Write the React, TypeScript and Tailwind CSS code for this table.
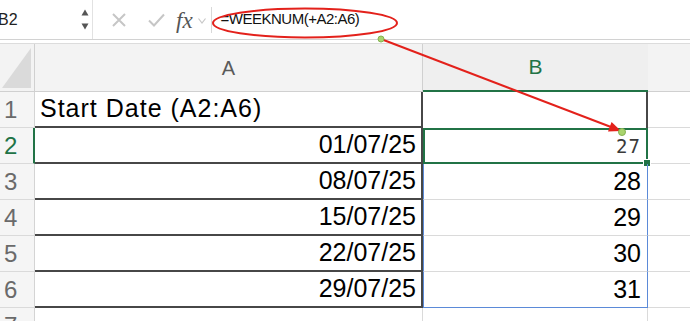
import React from "react";

type Row = { n: number; a: string; b: string };

const rows: Row[] = [
  { n: 1, a: "Start Date (A2:A6)", b: "" },
  { n: 2, a: "01/07/25", b: "27" },
  { n: 3, a: "08/07/25", b: "28" },
  { n: 4, a: "15/07/25", b: "29" },
  { n: 5, a: "22/07/25", b: "30" },
  { n: 6, a: "29/07/25", b: "31" },
  { n: 7, a: "", b: "" },
];

function Toolbar() {
  return (
    <div className="flex h-[40px] items-center border-b border-[#d2d2d2] bg-white">
      <div className="flex h-full w-[92px] items-center justify-between pr-[2px]">
        <span className="ml-[-2px] text-[16px] text-[#222]">B2</span>
        <svg width="8" height="22" viewBox="0 0 8 22" className="mr-[1px]">
          <path d="M0.5 6.5 L4 0.5 L7.5 6.5 Z" fill="#555" />
          <path d="M0.5 14.5 L4 20.5 L7.5 14.5 Z" fill="#555" />
        </svg>
      </div>
      <div className="h-full border-l border-[#e2e2e2]" />
      <svg width="14" height="14" viewBox="0 0 14 14" className="ml-[19px]">
        <path d="M1 1 L13 13 M13 1 L1 13" stroke="#c6c6c6" strokeWidth="2" />
      </svg>
      <svg width="17" height="14" viewBox="0 0 17 14" className="ml-[22px]">
        <path d="M1 7.5 L6 12.5 L16 1.5" stroke="#c6c6c6" strokeWidth="2" fill="none" />
      </svg>
      <span className="ml-[11px] mt-[2px] font-['Liberation_Serif',serif] text-[23px] italic leading-none text-[#555]">
        fx
      </span>
      <svg width="8" height="6" viewBox="0 0 8 6" className="ml-[5px] mt-[2px]">
        <path d="M0.5 0.5 L4 5 L7.5 0.5" stroke="#c8c8c8" strokeWidth="1.2" fill="none" />
      </svg>
      <div className="ml-[5px] flex h-[26px] items-center border-l border-[#d8d8d8] pl-[9px]">
        <span className="text-[15px] tracking-[-0.5px] text-[#111]">=WEEKNUM(+A2:A6)</span>
      </div>
    </div>
  );
}

function HeaderRow() {
  return (
    <div className="mt-[3px] flex h-[49px] border-t border-[#dcdcdc] bg-[#f3f3f3]">
      <div className="relative w-[35px] border-r border-b border-[#d0d0d0]">
        <svg width="30" height="40" viewBox="0 0 30 40" className="absolute left-[2px] top-[4px]">
          <path d="M29 0 L29 40 L0 40 Z" fill="#dadada" />
        </svg>
      </div>
      <div className="flex w-[388px] items-center justify-center border-r border-b border-[#d0d0d0] text-[20px] text-[#5a5a5a]">
        A
      </div>
      <div className="flex w-[225px] items-center justify-center border-b-2 border-[#217346] bg-[#efefef] text-[21px] text-[#217346]">
        B
      </div>
      <div className="flex-1 border-b border-[#d0d0d0]" />
    </div>
  );
}

function GridRow({ row }: { row: Row }) {
  const selected = row.n === 2;
  const inRange = row.n >= 3 && row.n <= 6;
  const lastInRange = row.n === 6;
  const dataRow = row.n <= 6;

  const rowHead = [
    "flex w-[35px] items-center bg-[#f5f5f5] pl-[4px] text-[24px]",
    selected
      ? "border-r-2 border-r-[#217346] text-[#217346]"
      : "border-r border-r-[#d4d4d4] text-[#6a6a6a]",
    "border-b border-b-[#dadada]",
  ].join(" ");

  const cellA = [
    "flex w-[388px] items-center",
    dataRow ? "border-r-2 border-b-2 border-[#474747]" : "border-r border-[#dadada]",
    row.n === 1 ? "justify-start pl-[5px]" : "justify-end pr-[5px]",
  ].join(" ");

  let cellB = "relative flex w-[225px] items-center justify-end pr-[6px]";
  if (row.n === 1) cellB += " border-r-2 border-r-[#474747]";
  else if (selected) cellB += " border-2 border-[#217346]";
  else if (inRange)
    cellB +=
      " border-x border-[#5b8ad8] " +
      (lastInRange ? "border-b border-b-[#5b8ad8]" : "border-b border-b-[#dadada]");
  else cellB += " border-r border-r-[#dadada]";

  return (
    <div className="flex h-[36px] shrink-0 bg-white">
      <div className={rowHead}>{row.n}</div>
      <div className={cellA}>
        <span className={row.n === 1 ? "text-[25px] tracking-[1px] text-black" : "text-[25px] text-black"}>
          {row.a}
        </span>
      </div>
      <div className={cellB}>
        {selected ? (
          <span className="mr-[-1px] font-['DejaVu_Sans_Mono',monospace] text-[19px] tracking-[1px] text-[#3a3a3a]">
            {row.b}
          </span>
        ) : (
          <span className="text-[25px] text-black">{row.b}</span>
        )}
        {selected && (
          <div className="absolute -bottom-[5px] -right-[5px] h-[8px] w-[8px] border border-white bg-[#217346]" />
        )}
      </div>
      <div className="flex-1 border-b border-[#dadada]" />
    </div>
  );
}

function Annotation() {
  return (
    <svg
      width="690"
      height="321"
      viewBox="0 0 690 321"
      className="pointer-events-none absolute left-0 top-0"
    >
      <ellipse cx="305" cy="23" rx="92" ry="14.5" fill="none" stroke="#e3211b" strokeWidth="2" />
      <line x1="381" y1="39" x2="611" y2="127" stroke="#e3211b" strokeWidth="2" />
      <polygon points="621,131 608,131.4 611.6,122" fill="#e3211b" />
      <circle cx="381" cy="39" r="3" fill="#a9d46e" stroke="#86b353" strokeWidth="1" />
      <circle cx="622" cy="132" r="3.5" fill="#a9d46e" stroke="#86b353" strokeWidth="1" />
    </svg>
  );
}

export default function App() {
  return (
    <div className="relative h-[321px] w-[690px] overflow-hidden bg-white font-['Liberation_Sans',Arial,sans-serif]">
      <Toolbar />
      <HeaderRow />
      {rows.map((row) => (
        <GridRow key={row.n} row={row} />
      ))}
      <Annotation />
    </div>
  );
}
